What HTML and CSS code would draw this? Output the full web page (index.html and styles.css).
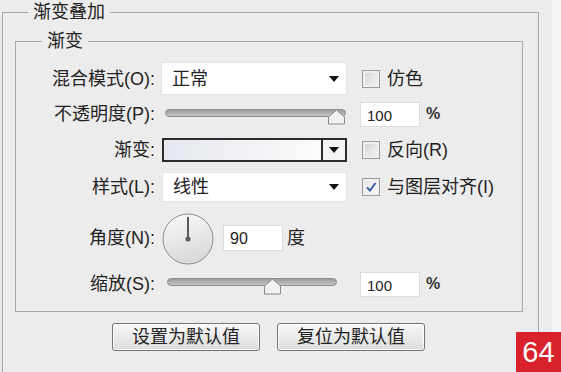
FILE: index.html
```html
<!DOCTYPE html>
<html lang="zh">
<head>
    <meta charset="UTF-8">
    <meta name="viewport" content="width=device-width, initial-scale=1.0">
    <title>渐变叠加</title>
    <link rel="stylesheet" href="styles.css">
</head>
<body>

    <div class="panel">
        <fieldset class="group outer">
            <legend>渐变叠加</legend>

            <fieldset class="group inner">
                <legend>渐变</legend>

                <div class="row row-blend">
                    <span class="lbl">混合模式(O):</span>
                    <div class="select">
                        <span>正常</span><i class="arrow"></i>
                    </div>
                    <label class="check"><span class="box"></span>仿色</label>
                </div>

                <div class="row row-opacity">
                    <span class="lbl">不透明度(P):</span>
                    <div class="slider slider-opacity">
                        <div class="track"></div>
                        <svg class="thumb" width="19" height="16" viewBox="0 0 19 16">
                            <path d="M1.5 8 L9.5 1 L17.5 8 L17.5 15 L1.5 15 Z" fill="#f1f1f1" stroke="#8a8a8a" stroke-width="1"/>
                        </svg>
                    </div>
                    <input class="num" type="text" value="100">
                    <span class="unit">%</span>
                </div>

                <div class="row row-gradient">
                    <span class="lbl">渐变:</span>
                    <div class="swatch">
                        <div class="swatch-fill"></div>
                        <div class="swatch-btn"><i class="arrow"></i></div>
                    </div>
                    <label class="check"><span class="box"></span>反向(R)</label>
                </div>

                <div class="row row-style">
                    <span class="lbl">样式(L):</span>
                    <div class="select select-style">
                        <span>线性</span><i class="arrow"></i>
                    </div>
                    <label class="check"><span class="box checked">
                        <svg width="12" height="12" viewBox="0 0 12 12">
                            <path d="M2 6.5 L5 9.5 L10.5 2" fill="none" stroke="#3b5aa8" stroke-width="2"/>
                        </svg>
                    </span>与图层对齐(I)</label>
                </div>

                <div class="row row-angle">
                    <span class="lbl">角度(N):</span>
                    <svg class="dial" width="52" height="52" viewBox="0 0 52 52">
                        <defs>
                            <linearGradient id="dialFill" x1="0" y1="0" x2="0.3" y2="1">
                                <stop offset="0" stop-color="#fbfbfb"/>
                                <stop offset="1" stop-color="#d9d9d9"/>
                            </linearGradient>
                        </defs>
                        <circle cx="26" cy="26" r="25" fill="url(#dialFill)" stroke="#8c8c8c" stroke-width="1"/>
                        <line x1="26" y1="26" x2="26" y2="4" stroke="#5a5a5a" stroke-width="2"/>
                        <circle cx="26" cy="26" r="2.5" fill="#5a5a5a"/>
                    </svg>
                    <input class="num num-angle" type="text" value="90">
                    <span class="unit unit-deg">度</span>
                </div>

                <div class="row row-scale">
                    <span class="lbl">缩放(S):</span>
                    <div class="slider slider-scale">
                        <div class="track"></div>
                        <svg class="thumb" width="19" height="17" viewBox="0 0 19 17">
                            <path d="M1.5 8 L9.5 1 L17.5 8 L17.5 16 L1.5 16 Z" fill="#f1f1f1" stroke="#8a8a8a" stroke-width="1"/>
                        </svg>
                    </div>
                    <input class="num" type="text" value="100">
                    <span class="unit">%</span>
                </div>
            </fieldset>

            <div class="buttons">
                <button type="button" class="btn">设置为默认值</button>
                <button type="button" class="btn">复位为默认值</button>
            </div>
        </fieldset>
    </div>

    <div class="badge">64</div>

</body>
</html>
```

FILE: styles.css
```css
* {
    box-sizing: border-box;
}

html, body {
    margin: 0;
}

body {
    width: 561px;
    height: 372px;
    overflow: hidden;
    position: relative;
    background-color: #f5f5f5;
    font-family: "Liberation Sans", "Noto Sans CJK SC", sans-serif;
    font-size: 18px;
    color: #222;
}

.panel {
    width: 552px;
    height: 372px;
    overflow: hidden;
    background: #ececec;
    padding-left: 2px;
}

.group {
    border: 1px solid #a6a6a6;
    margin: 0;
    padding: 0;
    min-width: 0;
}

.group > legend {
    font-size: 18px;
    line-height: 24px;
    padding: 0 5px;
}

.outer {
    width: 537px;
    height: 373px;
}

.outer > legend {
    margin-left: 25px;
}

.inner {
    width: 508px;
    margin: 5px 0 0 12px;
    padding: 9px 0 11px 0;
}

.inner > legend {
    margin-left: 26px;
}

.row {
    display: flex;
    align-items: center;
    line-height: 22px;
}

.lbl {
    width: 139px;
    text-align: right;
    flex-shrink: 0;
}

.row-blend { height: 33px; }
.row-opacity { height: 38px; }
.row-gradient { height: 34px; }
.row-style { height: 40px; }
.row-angle { height: 61px; }
.row-scale { height: 32px; }

/* listas desplegables */
.select {
    display: flex;
    align-items: center;
    justify-content: space-between;
    width: 186px;
    height: 33px;
    margin-left: 6px;
    padding: 0 7px 0 10px;
    background: #fff;
    border: 1px solid #e3e3e3;
}

.select-style {
    width: 185px;
    height: 30px;
    margin-left: 7px;
}

.arrow {
    display: block;
    width: 0;
    height: 0;
    border-left: 5px solid transparent;
    border-right: 5px solid transparent;
    border-top: 6px solid #111;
}

/* casillas */
.check {
    display: flex;
    align-items: center;
    margin-left: 15px;
}

.box {
    display: flex;
    align-items: center;
    justify-content: center;
    width: 18px;
    height: 18px;
    margin-right: 7px;
    border: 1px solid #9a9a9a;
    background: linear-gradient(135deg, #d2d2d2, #f6f6f6);
    box-shadow: inset 0 0 0 2px #efefef;
}

.box.checked {
    background: linear-gradient(135deg, #e4e4e4, #fbfbfb);
}

/* deslizadores */
.slider {
    position: relative;
    height: 17px;
}

.slider-opacity {
    width: 181px;
    margin-left: 10px;
    margin-top: 6px;
}

.slider-scale {
    width: 170px;
    margin-left: 12px;
    margin-top: 4px;
}

.track {
    height: 8px;
    border: 1px solid #8f8f8f;
    border-radius: 4px;
    background: linear-gradient(#9c9c9c, #c4c4c4);
}

.thumb {
    position: absolute;
    top: 0;
}

.slider-opacity .thumb {
    left: 162px;
}

.slider-scale .thumb {
    left: 96px;
}

.num {
    width: 60px;
    height: 25px;
    margin: 0 0 0 14px;
    padding: 2px 0 0 6px;
    border: 1px solid #dcdcdc;
    background: #fff;
    font-family: "Liberation Sans", sans-serif;
    font-size: 15px;
    color: #222;
}

.slider-scale + .num {
    margin-left: 23px;
}

.unit {
    margin-left: 6px;
    font-size: 16px;
    font-weight: bold;
    color: #333;
}

/* degradado */
.swatch {
    display: flex;
    width: 185px;
    height: 24px;
    margin-left: 7px;
    border: 2px solid #2b2b2b;
}

.swatch-fill {
    flex: 1;
    background: linear-gradient(to right, #e4e7ee, #fbfbfb);
}

.swatch-btn {
    display: flex;
    align-items: center;
    justify-content: center;
    width: 24px;
    border-left: 2px solid #2b2b2b;
    background: #f4f4f4;
}

/* ángulo */
.dial {
    margin-left: 7px;
    margin-top: 2px;
}

.num-angle {
    width: 60px;
    height: 26px;
    margin-left: 9px;
    font-size: 16px;
}

.unit-deg {
    font-size: 18px;
    font-weight: normal;
    color: #222;
    margin-left: 4px;
}

/* botones */
.buttons {
    display: flex;
    gap: 17px;
    margin: 11px 0 0 109px;
}

.btn {
    width: 148px;
    height: 28px;
    padding: 0;
    border: 1px solid #737373;
    border-radius: 3px;
    background: linear-gradient(#f8f8f8, #dcdcdc);
    box-shadow: inset 0 0 0 1px #fdfdfd;
    font-family: "Liberation Sans", "Noto Sans CJK SC", sans-serif;
    font-size: 18px;
    line-height: 24px;
    color: #222;
}

.badge {
    position: absolute;
    right: 0;
    bottom: 0;
    width: 45px;
    height: 40px;
    background: #d8212b;
    color: #fff;
    font-size: 29px;
    line-height: 40px;
    text-align: center;
}
```
